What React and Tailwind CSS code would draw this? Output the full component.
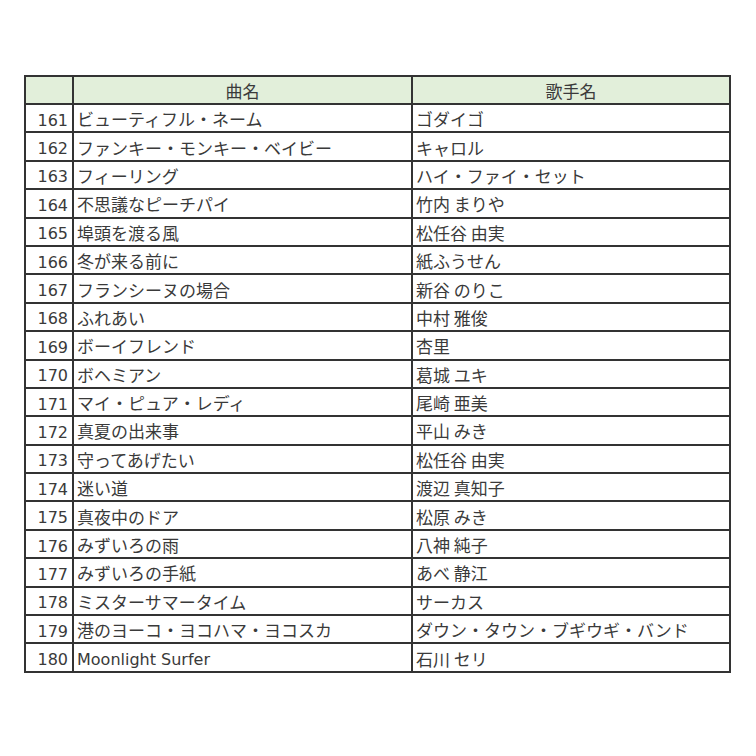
import React from "react";

const rows = [
  [161, "ビューティフル・ネーム", "ゴダイゴ"],
  [162, "ファンキー・モンキー・ベイビー", "キャロル"],
  [163, "フィーリング", "ハイ・ファイ・セット"],
  [164, "不思議なピーチパイ", "竹内 まりや"],
  [165, "埠頭を渡る風", "松任谷 由実"],
  [166, "冬が来る前に", "紙ふうせん"],
  [167, "フランシーヌの場合", "新谷 のりこ"],
  [168, "ふれあい", "中村 雅俊"],
  [169, "ボーイフレンド", "杏里"],
  [170, "ボヘミアン", "葛城 ユキ"],
  [171, "マイ・ピュア・レディ", "尾崎 亜美"],
  [172, "真夏の出来事", "平山 みき"],
  [173, "守ってあげたい", "松任谷 由実"],
  [174, "迷い道", "渡辺 真知子"],
  [175, "真夜中のドア", "松原 みき"],
  [176, "みずいろの雨", "八神 純子"],
  [177, "みずいろの手紙", "あべ 静江"],
  [178, "ミスターサマータイム", "サーカス"],
  [179, "港のヨーコ・ヨコハマ・ヨコスカ", "ダウン・タウン・ブギウギ・バンド"],
  [180, "Moonlight Surfer", "石川 セリ"],
];

const cjk = { fontFamily: '"Noto Sans CJK JP", "Noto Sans", sans-serif' };
const latin = { fontFamily: '"DejaVu Sans", "Noto Sans CJK JP", sans-serif' };

function Txt({ s }) {
  const ascii = /^[\x00-\x7f]+$/.test(s);
  return ascii ? (
    <span className="inline-block pt-[5px] text-[16px]" style={latin}>{s}</span>
  ) : (
    <span className="inline-block pt-[1px]">{s}</span>
  );
}

export default function App() {
  return (
    <div className="w-[756px] h-[756px] bg-white pt-[75px] pl-[24px]" style={cjk}>
      <div className="w-[707px] border-2 border-[#333] text-[17px] text-[#3a3a3a] leading-none">
        <div className="flex h-[28px] bg-[#e2efda] border-b-2 border-[#333]">
          <div className="w-[48px] border-r-2 border-[#333]" />
          <div className="w-[339px] border-r-2 border-[#333] flex items-center justify-center pt-[1px]">曲名</div>
          <div className="flex-1 flex items-center justify-center pt-[1px]">歌手名</div>
        </div>
        {rows.map(([n, song, artist], i) => (
          <div
            key={n}
            className={i < rows.length - 1 ? "flex h-[28.4px] border-b-2 border-[#333]" : "flex h-[26.4px]"}
          >
            <div className="w-[48px] border-r-2 border-[#333] flex items-center justify-end pr-[4px] pt-[5px] text-[16px]" style={latin}>{n}</div>
            <div className="w-[339px] border-r-2 border-[#333] flex items-center pl-[3px] whitespace-nowrap"><Txt s={song} /></div>
            <div className="flex-1 flex items-center pl-[3px] whitespace-nowrap"><Txt s={artist} /></div>
          </div>
        ))}
      </div>
    </div>
  );
}
